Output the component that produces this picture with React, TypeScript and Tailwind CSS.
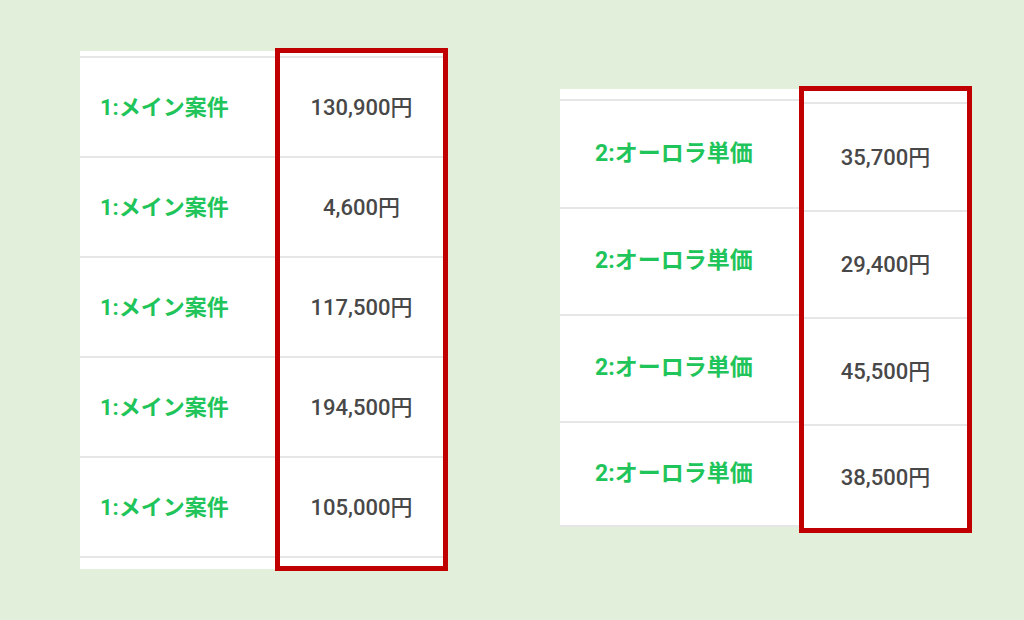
const mainRows = ["130,900円", "4,600円", "117,500円", "194,500円", "105,000円"];
const auroraRows = ["35,700円", "29,400円", "45,500円", "38,500円"];
const auroraHeights = ["h-[108px]", "h-[107px]", "h-[107px]", "h-[104px]"];

const font = { fontFamily: 'Roboto, "Noto Sans CJK JP", sans-serif' };

function MainTable() {
  return (
    <div className="flex items-start">
      {/* label column */}
      <div className="mt-[3px] w-[195px] bg-white pt-[5px] pb-[11px]">
        {mainRows.map((_, i) => (
          <div
            key={i}
            className="flex h-[100px] items-center border-t-2 border-[#e6e6e6] pl-[20px] text-[22px] font-bold text-[#1fc45a]"
          >
            1:メイン案件
          </div>
        ))}
        <div className="border-t-2 border-[#e6e6e6]" />
      </div>
      {/* highlighted price column */}
      <div className="w-[173px] border-[5px] border-[#c00000] bg-white pt-[3px] pb-[8px]">
        {mainRows.map((p, i) => (
          <div
            key={i}
            className="flex h-[100px] items-center justify-center border-t-2 border-[#e6e6e6] text-[22px] font-medium text-[#484848]"
          >
            {p}
          </div>
        ))}
        <div className="border-t-2 border-[#e6e6e6]" />
      </div>
    </div>
  );
}

function AuroraTable() {
  return (
    <div className="flex items-start">
      <div className="mt-[3px] w-[239px] bg-white pt-[10px]">
        {auroraRows.map((_, i) => (
          <div
            key={i}
            className={`flex ${auroraHeights[i]} items-center border-t-2 border-[#e6e6e6] pl-[35px] text-[23px] font-bold text-[#1fc45a]`}
          >
            2:オーロラ単価
          </div>
        ))}
        <div className="border-t-2 border-[#e6e6e6]" />
      </div>
      <div className="w-[173px] border-[5px] border-[#c00000] bg-white pt-[11px]">
        {auroraRows.map((p, i) => (
          <div
            key={i}
            className={`flex ${auroraHeights[i]} items-center justify-center border-t-2 border-[#e6e6e6] text-[22px] font-medium text-[#484848]`}
          >
            {p}
          </div>
        ))}
      </div>
    </div>
  );
}

export default function App() {
  return (
    <div className="h-[620px] w-[1024px] overflow-hidden bg-[#e2efda]" style={font}>
      <div className="flex items-start pl-[80px]">
        <div className="mt-[48px]">
          <MainTable />
        </div>
        <div className="ml-[112px] mt-[86px]">
          <AuroraTable />
        </div>
      </div>
    </div>
  );
}
